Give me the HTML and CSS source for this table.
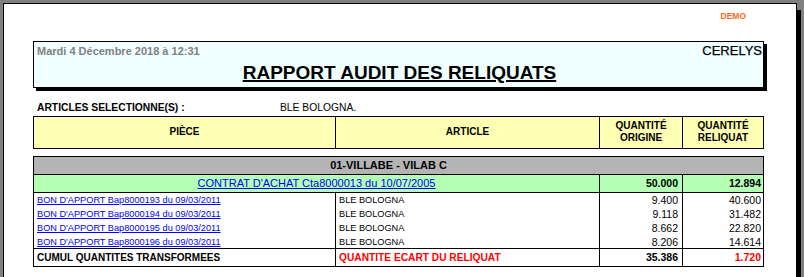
FILE: index.html
```html
<!DOCTYPE html>
<html lang="fr">
<head>
<meta charset="utf-8">
<title>Rapport audit des reliquats</title>
<link rel="stylesheet" href="styles.css">
</head>
<body>
<div class="page">
  <div class="demo">DEMO</div>
  <div class="report-head">
    <div class="head-top">
      <span class="date">Mardi 4 Décembre 2018 à 12:31</span>
      <span class="company">CERELYS</span>
    </div>
    <h1 class="title">RAPPORT AUDIT DES RELIQUATS</h1>
  </div>
  <div class="selection">
    <span class="sel-label">ARTICLES SELECTIONNE(S) :</span>
    <span class="sel-value">BLE BOLOGNA.</span>
  </div>
  <div class="grid head-grid">
    <div class="hcell">PIÈCE</div>
    <div class="hcell sep">ARTICLE</div>
    <div class="hcell sep">QUANTITÉ<br>ORIGINE</div>
    <div class="hcell sep">QUANTITÉ<br>RELIQUAT</div>
  </div>
  <div class="grid body-grid">
    <div class="group">01-VILLABE - VILAB C</div>

    <div class="contract"><a href="#">CONTRAT D'ACHAT Cta8000013 du 10/07/2005</a></div>
    <div class="crow num3 sep strong">50.000</div>
    <div class="crow num4 sep strong">12.894</div>

    <div class="drow piece"><a href="#">BON D'APPORT Bap8000193 du 09/03/2011</a></div>
    <div class="drow art sep">BLE BOLOGNA</div>
    <div class="drow num3 sep">9.400</div>
    <div class="drow num4 sep">40.600</div>

    <div class="drow piece"><a href="#">BON D'APPORT Bap8000194 du 09/03/2011</a></div>
    <div class="drow art sep">BLE BOLOGNA</div>
    <div class="drow num3 sep">9.118</div>
    <div class="drow num4 sep">31.482</div>

    <div class="drow piece"><a href="#">BON D'APPORT Bap8000195 du 09/03/2011</a></div>
    <div class="drow art sep">BLE BOLOGNA</div>
    <div class="drow num3 sep">8.662</div>
    <div class="drow num4 sep">22.820</div>

    <div class="drow piece last"><a href="#">BON D'APPORT Bap8000196 du 09/03/2011</a></div>
    <div class="drow art sep last">BLE BOLOGNA</div>
    <div class="drow num3 sep last">8.206</div>
    <div class="drow num4 sep last">14.614</div>

    <div class="trow tlabel">CUMUL QUANTITES TRANSFORMEES</div>
    <div class="trow tlabel red sep">QUANTITE ECART DU RELIQUAT</div>
    <div class="trow num3 sep tnum">35.386</div>
    <div class="trow num4 sep tnum red">1.720</div>
  </div>
</div>
</body>
</html>
```

FILE: styles.css
```css
* { box-sizing: border-box; }

html, body {
  margin: 0;
  padding: 0;
}

body {
  background: #808080;
  font-family: "Liberation Sans", Arial, sans-serif;
  color: #000;
  overflow: hidden;
  height: 277px;
}

.page {
  margin: 3px 0 0 3px;
  width: 794px;
  height: 300px;
  background: #fff;
  border: 1px solid #000;
  box-shadow: 4px 7px 0 #000;
  padding: 7px 0 0 29px;
}

.demo {
  width: 731px;
  text-align: right;
  padding-right: 18px;
  font-size: 8.5px;
  line-height: 10px;
  font-weight: bold;
  color: #ff6a1a;
}

.report-head {
  margin-top: 20px;
  width: 731px;
  background: #f0ffff;
  border: 1px solid #000;
  box-shadow: 3px 3px 0 #000;
  padding: 2px 1px 3px 3px;
}

.head-top {
  display: flex;
  justify-content: space-between;
  align-items: flex-start;
  height: 14px;
}

.date {
  font-size: 11px;
  line-height: 14px;
  font-weight: bold;
  color: #808080;
}

.company {
  font-size: 13px;
  line-height: 14px;
  -webkit-text-stroke: 0.25px #000;
}

.title {
  margin: 4px 0 0 0;
  font-size: 19px;
  line-height: 22px;
  font-weight: bold;
  text-align: center;
  text-decoration: underline;
  text-decoration-thickness: 2px;
}

.selection {
  display: flex;
  margin-top: 14px;
  margin-bottom: 2px;
  padding-left: 4px;
  font-size: 10.3px;
  line-height: 12px;
}

.sel-label {
  flex: 0 0 243px;
  font-weight: bold;
}

.grid {
  display: grid;
  width: 731px;
  border: 1px solid #000;
  grid-template-columns: 301px 264px 83px 81px;
}

.sep { border-left: 1px solid #000; }

.head-grid {
  background: #ffffb3;
  grid-template-rows: 31px;
}

.hcell {
  display: flex;
  align-items: center;
  justify-content: center;
  text-align: center;
  font-size: 10px;
  line-height: 12px;
  font-weight: bold;
  padding-bottom: 2px;
}

.body-grid {
  margin-top: 7px;
  grid-template-rows: 18px 18px 14px 14px 14px 14px 17px;
}

a {
  color: #0000ff;
  text-decoration: underline;
}

.group {
  grid-column: 1 / span 4;
  background: #b4b4b4;
  border-bottom: 1px solid #000;
  text-align: center;
  font-size: 11px;
  line-height: 17px;
  font-weight: bold;
  padding-right: 20px;
}

.contract {
  grid-column: 1 / span 2;
  background: #b4ffb4;
  border-bottom: 1px solid #000;
  text-align: center;
  font-size: 11px;
  line-height: 17px;
}

.crow {
  background: #b4ffb4;
  border-bottom: 1px solid #000;
  line-height: 17px;
}

.strong {
  font-weight: bold;
  font-size: 10.5px;
}

.num3 {
  text-align: right;
  padding-right: 4px;
}

.num4 {
  text-align: right;
  padding-right: 2px;
}

.drow {
  font-size: 9.2px;
  line-height: 14px;
}

.drow.num3, .drow.num4 {
  font-size: 10.5px;
  line-height: 15px;
}

.piece, .art {
  padding-left: 3px;
  white-space: nowrap;
}

.last { border-bottom: 1px solid #000; }

.trow {
  line-height: 17px;
  font-weight: bold;
}

.tlabel {
  font-size: 10px;
  padding-left: 3px;
}

.tlabel.red { font-size: 10.2px; }

.tnum { font-size: 10.5px; }

.red { color: #ff0000; }
```
